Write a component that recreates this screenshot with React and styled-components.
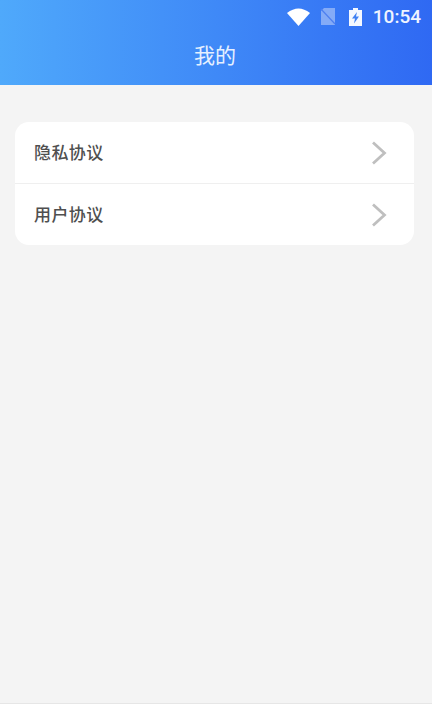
import React from "react";
import styled, { createGlobalStyle } from "styled-components";

const Global = createGlobalStyle`
  html, body { margin: 0; padding: 0; background: #fff; }
  body { font-family: "Noto Sans CJK SC", "Roboto", sans-serif; }
`;

const Screen = styled.div`
  width: 432px;
  height: 714px;
  display: flex;
  flex-direction: column;
  overflow: hidden;
  background: #fff;
`;

const Page = styled.div`
  height: 704px;
  display: flex;
  flex-direction: column;
  background: #f4f4f4;
  border-bottom: 1px solid #e6e6e6;
  box-sizing: border-box;
`;

const Header = styled.header`
  height: 85px;
  flex: none;
  display: flex;
  flex-direction: column;
  background: linear-gradient(90deg, #4fa9fb 0%, #2f69f3 100%);
`;

const StatusBar = styled.div`
  height: 33px;
  display: flex;
  align-items: center;
  justify-content: flex-end;
  padding-right: 11px;
  color: #fff;
`;

const StatusIcon = styled.svg`
  display: block;
  flex: none;
  margin-right: ${(p) => p.$gap}px;
`;

const Time = styled.span`
  font-family: Roboto, sans-serif;
  font-size: 19px;
  font-weight: 500;
  line-height: 20px;
  color: #eef4ff;
`;

const Title = styled.h1`
  margin: 0;
  height: 42px;
  line-height: 42px;
  padding-right: 2px;
  text-align: center;
  font-size: 21px;
  font-weight: 400;
  color: #e6f0ff;
`;

const Card = styled.section`
  margin: 37px 18px 0 15px;
  background: #fff;
  border-radius: 14px;
  overflow: hidden;
`;

const Row = styled.div`
  height: 61px;
  box-sizing: border-box;
  display: flex;
  align-items: center;
  justify-content: space-between;
  padding: 0 27px 0 19px;
  & + & {
    height: 62px;
    border-top: 1px solid #efefef;
  }
`;

const Label = styled.span`
  font-size: 17px;
  line-height: 24px;
  margin-top: -1px;
  font-weight: 500;
  letter-spacing: 0.4px;
  color: #4f4f4f;
`;

const Chevron = () => (
  <svg width="16" height="26" viewBox="0 0 16 26" fill="none">
    <path d="M2 2.5 L13.5 13 L2 23.5" stroke="#bfbfbf" strokeWidth="2.8" />
  </svg>
);

export default function App() {
  return (
    <Screen>
      <Global />
      <Page>
        <Header>
          <StatusBar>
            <StatusIcon $gap={10} width="23" height="18" viewBox="0 0 23 18">
              <path d="M0 5 Q11.5 -4 23 5 L11.5 18 Z" fill="#fff" />
            </StatusIcon>
            <StatusIcon $gap={13} width="16" height="17" viewBox="0 0 16 17">
              <path d="M4 0 H15 V17 H1 V3 Z" fill="#84abf7" />
              <path d="M1 1 L15 16" stroke="#4d7ff0" strokeWidth="1.2" />
            </StatusIcon>
            <StatusIcon $gap={11} width="13" height="18" viewBox="0 0 13 18">
              <path d="M4 0 H9 V2 H13 V18 H0 V2 H4 Z" fill="#f4f8ff" />
              <path d="M8 4 L3 10.5 H6 L5 15.5 L10 8.5 H7 Z" fill="#3f80f3" />
            </StatusIcon>
            <Time>10:54</Time>
          </StatusBar>
          <Title>我的</Title>
        </Header>
        <Card>
          <Row>
            <Label>隐私协议</Label>
            <Chevron />
          </Row>
          <Row>
            <Label>用户协议</Label>
            <Chevron />
          </Row>
        </Card>
      </Page>
    </Screen>
  );
}
